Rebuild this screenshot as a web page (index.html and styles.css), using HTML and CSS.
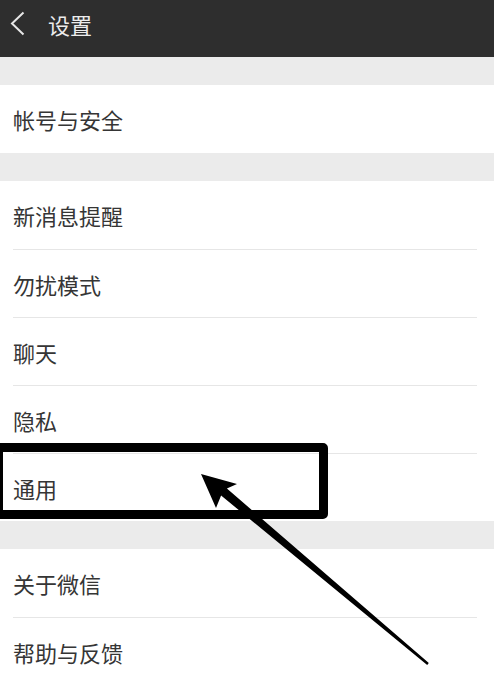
FILE: index.html
```html
<!DOCTYPE html>
<html lang="zh-CN">
<head>
  <meta charset="UTF-8">
  <meta name="viewport" content="width=device-width, initial-scale=1.0">
  <title>设置</title>
  <link rel="stylesheet" href="styles.css">
</head>
<body>
  <div class="screen">
    <header class="topbar">
      <svg class="back" width="16" height="26" viewBox="0 0 16 26">
        <polyline points="13.5,1.5 2,12.5 13.5,23.5" fill="none" stroke="#e6e6e6" stroke-width="2"/>
      </svg>
      <h1>设置</h1>
    </header>

    <section class="group">
      <div class="item">帐号与安全</div>
    </section>

    <section class="group">
      <div class="item">新消息提醒</div>
      <div class="item">勿扰模式</div>
      <div class="item">聊天</div>
      <div class="item">隐私</div>
      <div class="item">通用</div>
    </section>

    <section class="group">
      <div class="item">关于微信</div>
      <div class="item">帮助与反馈</div>
    </section>

    <!-- annotation drawn over the screenshot -->
    <div class="highlight"></div>
    <svg class="arrow" width="494" height="685" viewBox="0 0 494 685">
      <polygon points="201,474 237,484 226.9,488.5 428.8,663.1 427.2,664.9 221.1,495.5 216,508" fill="#000"/>
    </svg>
  </div>
</body>
</html>
```

FILE: styles.css
```css
:root {
  --bar: #2e2e2e;
  --band: #ebebeb;
  --text: #353535;
  --line: #e6e6e6;
}

* {
  margin: 0;
  padding: 0;
  box-sizing: border-box;
}

body {
  background: var(--band);
  font-family: "Noto Sans CJK SC", "Noto Sans", sans-serif;
  color: var(--text);
}

.screen {
  position: relative;
  width: 494px;
  height: 685px;
  overflow: hidden;
}

.topbar {
  height: 57px;
  background: var(--bar);
  display: flex;
  align-items: center;
  padding: 0 0 9px 10px;
  gap: 22px;
}

.topbar .back {
  display: block;
}

.topbar h1 {
  font-size: 22px;
  font-weight: 400;
  color: #ececec;
  line-height: 1;
}

.group {
  background: #fff;
  margin-top: 28px;
}

.item {
  height: 68px;
  margin: 0 17px 0 13px;
  display: flex;
  align-items: center;
  font-size: 22px;
  line-height: 1;
}

.item + .item {
  border-top: 1px solid var(--line);
}

.highlight {
  position: absolute;
  left: -6px;
  top: 443px;
  width: 334px;
  height: 76px;
  border: 9px solid #000;
  border-radius: 5px;
}

.arrow {
  position: absolute;
  left: 0;
  top: 0;
}
```
